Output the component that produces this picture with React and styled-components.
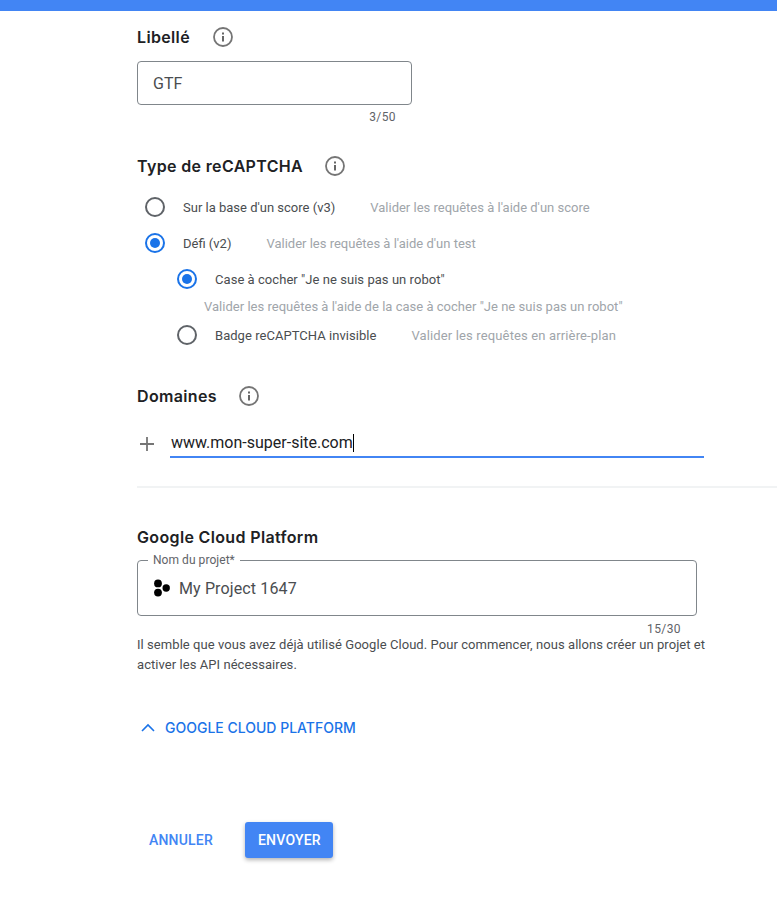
import React from "react";
import styled, { createGlobalStyle } from "styled-components";

const Global = createGlobalStyle`
  html, body { margin: 0; padding: 0; background: #fff; }
  body { font-family: Roboto, "Liberation Sans", sans-serif; color: #202124; overflow: hidden; }
`;
const Page = styled.div`
  width: 777px; height: 909px; overflow: hidden; display: flex; flex-direction: column;
`;
const TopBar = styled.div`height: 11px; background: #4285f4; flex: none;`;
const Content = styled.div`padding: 14px 0 0 137px; display: flex; flex-direction: column;`;
const HeadingRow = styled.div`
  display: flex; align-items: center; gap: ${p => p.$gap}px; height: 24px; margin-top: ${p => p.$top || 0}px;
`;
const Heading = styled.h2`
  margin: 0; font: 600 16px/24px Inter, sans-serif; letter-spacing: .35px; color: #202124;
`;
const Info = styled.svg`width: 22px; height: 22px; flex: none; display: block;`;
const InfoIcon = () => (
  <Info viewBox="0 0 22 22" fill="none">
    <circle cx="11" cy="11" r="9" stroke="#757575" strokeWidth="1.8" />
    <rect x="10" y="10" width="2" height="5.5" fill="#666" />
    <rect x="10" y="6.5" width="2" height="2" fill="#666" />
  </Info>
);
const Outlined = styled.div`
  box-sizing: border-box; width: ${p => p.$w}px; height: ${p => p.$h}px; border: 1px solid #80868b; border-radius: 4px;
  display: flex; align-items: center; font-size: 16px; color: #4a4d50; position: relative; letter-spacing: ${p => p.$spacing || 0}px;
  margin-top: ${p => p.$top}px; padding-left: 15px;
`;
const Counter = styled.div`
  font-size: 12px; line-height: 14px; color: #5f6368; letter-spacing: .4px; text-align: right; width: ${p => p.$w}px; margin-top: ${p => p.$top}px;
`;
const RadioGroup = styled.div`display: flex; flex-direction: column; margin-top: 11px; padding-left: 8px;`;
const RadioRow = styled.div`
  display: flex; align-items: center; height: 36px; padding-left: ${p => p.$indent ? 32 : 0}px;
`;
const Radio = styled.span`
  box-sizing: border-box; width: 20px; height: 20px; border-radius: 50%; flex: none;
  border: 2px solid ${p => p.$on ? "#1a73e8" : "#5f6368"}; display: flex; align-items: center; justify-content: center;
  &::after { content: ""; width: 10px; height: 10px; border-radius: 50%; background: ${p => p.$on ? "#1a73e8" : "transparent"}; }
`;
const RadioLabel = styled.span`font-size: 13px; color: #4a4d50; margin-left: 18px; letter-spacing: ${p => p.$spacing || 0}px;`;
const Hint = styled.span`font-size: 13px; color: #a0a5aa; margin-left: ${p => p.$left}px; letter-spacing: ${p => p.$spacing || 0}px;`;
const SubHint = styled.div`font-size: 13px; color: #a0a5aa; line-height: 20px; padding-left: 59px; letter-spacing: .02px;`;
const DomainRow = styled.div`display: flex; align-items: center; margin-top: 18px; height: 32px;`;
const Plus = styled.svg`width: 20px; height: 20px; flex: none; margin: 4px 13px 0 0; display: block;`;
const DomainInput = styled.div`
  box-sizing: border-box; width: 534px; height: 32px; border-bottom: 2px solid #4285f4; font-size: 16px; line-height: 26px;
  color: #202124; padding: 4px 0 0 1px; display: flex; align-items: center;
`;
const Caret = styled.span`width: 1px; height: 18px; background: #000;`;
const Divider = styled.div`height: 2px; background: #f1f3f4; margin-top: 28px;`;
const Legend = styled.span`
  position: absolute; top: -8px; left: 10px; background: #fff; padding: 0 5px; font-size: 12px; line-height: 14px; color: #5f6368; letter-spacing: .05px;
`;
const ProjectIcon = styled.svg`width: 18px; height: 18px; flex: none; margin-right: 8px; display: block;`;
const Help = styled.p`
  margin: -1px 0 0; width: 580px; font-size: 13px; line-height: 20px; color: #4a4d50; letter-spacing: .06px;
`;
const Expander = styled.div`
  display: flex; align-items: center; margin-top: 43px; color: #1a73e8; font: 500 14px/20px Inter, Roboto, sans-serif;
`;
const Chevron = styled.svg`width: 20px; height: 20px; flex: none; margin-right: 8px; display: block;`;
const Actions = styled.div`display: flex; align-items: center; margin-top: 84px; gap: 20px;`;
const TextButton = styled.button`
  all: unset; font: 500 14px/36px Roboto, sans-serif; color: #4285f4; padding: 0 12px; letter-spacing: .2px;
`;
const PrimaryButton = styled.button`
  all: unset; font: 500 14px/36px Roboto, sans-serif; color: #fff; background: #4285f4; padding: 0 12px 0 13px; border-radius: 3px; letter-spacing: .2px;
  box-shadow: 0 2px 4px rgba(0,0,0,.3);
`;

export default function App() {
  return (
    <Page>
      <Global />
      <TopBar />
      <Content>
        <HeadingRow $gap={22}><Heading>Libellé</Heading><InfoIcon /></HeadingRow>
        <Outlined $w={275} $h={44} $top={12}>GTF</Outlined>
        <Counter $w={259} $top={5}>3/50</Counter>
        <HeadingRow $gap={21} $top={30}><Heading>Type de reCAPTCHA</Heading><InfoIcon /></HeadingRow>
        <RadioGroup>
          <RadioRow><Radio /><RadioLabel>Sur la base d'un score (v3)</RadioLabel><Hint $left={35}>Valider les requêtes à l'aide d'un score</Hint></RadioRow>
          <RadioRow><Radio $on /><RadioLabel>Défi (v2)</RadioLabel><Hint $left={35}>Valider les requêtes à l'aide d'un test</Hint></RadioRow>
          <RadioRow $indent><Radio $on /><RadioLabel $spacing={0.05}>Case à cocher "Je ne suis pas un robot"</RadioLabel></RadioRow>
          <SubHint>Valider les requêtes à l'aide de la case à cocher "Je ne suis pas un robot"</SubHint>
          <RadioRow $indent><Radio /><RadioLabel $spacing={0.04}>Badge reCAPTCHA invisible</RadioLabel><Hint $left={35} $spacing={0.14}>Valider les requêtes en arrière-plan</Hint></RadioRow>
        </RadioGroup>
        <HeadingRow $gap={21} $top={31}><Heading>Domaines</Heading><InfoIcon /></HeadingRow>
        <DomainRow>
          <Plus viewBox="0 0 20 20"><path d="M10 3v14M3 10h14" stroke="#757575" strokeWidth="1.8" fill="none" /></Plus>
          <DomainInput>www.mon-super-site.com<Caret /></DomainInput>
        </DomainRow>
        <Divider />
        <HeadingRow $gap={0} $top={37}><Heading>Google Cloud Platform</Heading></HeadingRow>
        <Outlined $w={560} $h={56} $top={11} $spacing={0.13}>
          <Legend>Nom du projet*</Legend>
          <ProjectIcon viewBox="0 0 18 18" fill="#000">
            <circle cx="5" cy="4.4" r="3.9" /><circle cx="5" cy="13.6" r="3.9" /><circle cx="13.2" cy="9" r="3.7" />
          </ProjectIcon>
          My Project 1647
        </Outlined>
        <Counter $w={544} $top={6}>15/30</Counter>
        <Help>Il semble que vous avez déjà utilisé Google Cloud. Pour commencer, nous allons créer un projet et activer les API nécessaires.</Help>
        <Expander>
          <Chevron viewBox="0 0 20 20"><path d="M5 13l6-6 6 6" stroke="#1a73e8" strokeWidth="1.6" fill="none" /></Chevron>
          GOOGLE CLOUD PLATFORM
        </Expander>
        <Actions>
          <TextButton>ANNULER</TextButton>
          <PrimaryButton>ENVOYER</PrimaryButton>
        </Actions>
      </Content>
    </Page>
  );
}
